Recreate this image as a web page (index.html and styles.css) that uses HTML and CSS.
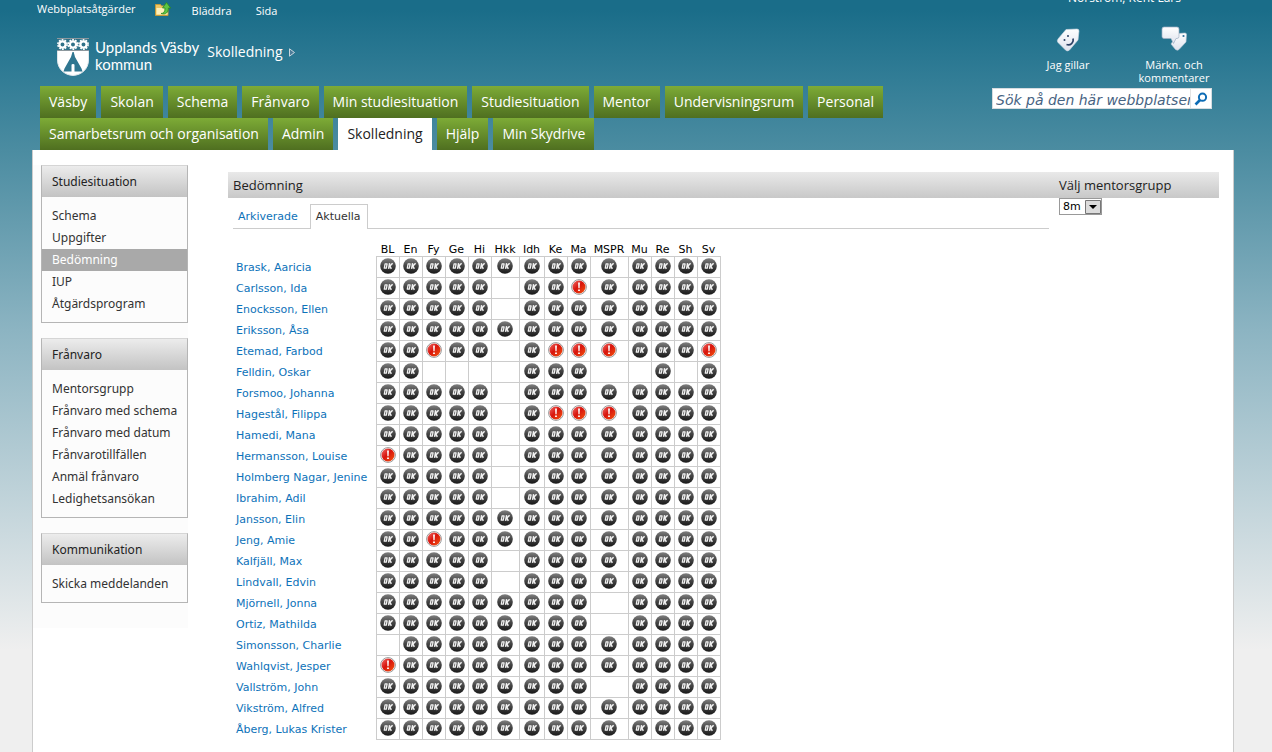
FILE: index.html
```html
<!DOCTYPE html>
<html lang="sv">
<head>
<meta charset="utf-8">
<title>Bedömning – Skolledning</title>
<link rel="stylesheet" href="styles.css">
</head>
<body>
<svg class="defs" aria-hidden="true">
  <defs>
    <linearGradient id="dark" x1="0" y1="0" x2="0" y2="1"><stop offset="0" stop-color="#808080"/><stop offset=".45" stop-color="#484848"/><stop offset="1" stop-color="#181818"/></linearGradient>
    <linearGradient id="red" x1="0" y1="0" x2="1" y2="1"><stop offset="0" stop-color="#f0706c"/><stop offset=".45" stop-color="#d8140c"/><stop offset="1" stop-color="#f4560f"/></linearGradient>
    <linearGradient id="pale" x1="0" y1="0" x2="0" y2="1"><stop offset="0" stop-color="#fff"/><stop offset="1" stop-color="#dfe3ee"/></linearGradient>
  </defs>
  <symbol id="ok" viewBox="0 0 16 16">
    <circle cx="8" cy="8" r="7.8" fill="url(#dark)"/>
    <path d="M5.100 5.900h2L6.300 10.200h-2z" fill="none" stroke="#f2f2f2" stroke-width="1.300" stroke-linejoin="round"/>
    <path d="M9.600 5.200 8.600 10.900M12.600 5.200 9.900 8l1.400 2.900" fill="none" stroke="#f2f2f2" stroke-width="1.500"/>
  </symbol>
  <symbol id="warn" viewBox="0 0 16 16">
    <circle cx="8" cy="8" r="7.400" fill="#fff" stroke="#8c8c8c" stroke-width=".9"/>
    <circle cx="8" cy="8" r="6.500" fill="url(#red)"/>
    <path d="M7.100 3.400h1.800l-.3 5.800H7.400zM7.100 10.400h1.800v1.700H7.100z" fill="#fff"/>
  </symbol>
  <symbol id="gear" viewBox="0 0 10 10">
    <circle cx="5" cy="5" r="4.200" fill="none" stroke="#fff" stroke-width="1.400" stroke-dasharray="1.700 .94"/>
    <circle cx="5" cy="5" r="2.800" fill="none" stroke="#fff" stroke-width="2"/>
  </symbol>
</svg>

<div class="ribbon">
  <div class="ribbon-left">
    <a class="site-actions" href="#">Webbplatsåtgärder</a>
    <button class="folder" type="button" aria-label="Navigera uppåt">
      <svg viewBox="0 0 16 16" width="16" height="16"><path d="M.5 3.500h5l1 1.500h6.500v9.500H.5z" fill="#efc765" stroke="#c39a3a"/><path d="M1.500 7h11v6.500h-11z" fill="#fdf0bb"/><path d="M6 12.500c3 0 4-2 4-5.500H7.500L11.500 1.500 15.700 7h-2.300c0 4.500-2.500 7-7.400 5.500z" fill="#5cc544" stroke="#2a8a1e" stroke-width=".8"/></svg>
    </button>
    <a class="ribbon-tab" href="#">Bläddra</a>
    <a class="ribbon-tab" href="#">Sida</a>
  </div>
  <a class="user" href="#">Norström, Kent Lars</a>
</div>

<header class="header">
  <div class="brand">
    <svg class="shield" viewBox="0 0 32 38" width="32" height="38">
      <path d="M.5.5h31v21.500c0 9-7 15-15.500 15.500C7.500 37 .5 31 .5 22z" fill="#fff" stroke="#dfe6ea"/>
      <path d="M0 0h32v12.500H0z" fill="#2f7188"/>
      <path d="M0 .5h32M0 12.500h32" stroke="#8d989e"/>
      <use href="#gear" x="0" y="1" width="11" height="11"/><use href="#gear" x="10.500" y="1" width="11" height="11"/><use href="#gear" x="21" y="1" width="11" height="11"/>
      <path d="M15.500 14h1.200l1.300 5 6.500 11.500 1 3h-8v-7h-3v7h-8l1-3L14 19z" fill="#2f7690"/>
      <path d="M15.200 26h1.600v7h-1.600z" fill="#fff"/>
    </svg>
    <div class="brand-name">Upplands Väsby<br>kommun</div>
    <a class="site-title" href="#">Skolledning
      <svg viewBox="0 0 6 9" width="6" height="9"><path d="M.5.8v7.400l5-3.700z" fill="#4b7c98" stroke="#c9d6de"/></svg>
    </a>
  </div>
  <div class="social">
    <a href="#">
      <svg viewBox="0 0 26 26" width="26" height="26"><path d="M11 3.500 22 3q2 0 2 2l-1 9-8.500 10q-1.500 1.500-3.500.5l-8-8q-1.500-1.500 0-3.500z" fill="url(#pale)" stroke="#cfd8e4" stroke-width=".6"/><circle cx="9.500" cy="14" r="1" fill="#2b3f63"/><circle cx="13" cy="10" r="1" fill="#2b3f63"/><path d="M11.500 18.500c4 1.500 7.500-2 6.500-6" fill="none" stroke="#2b3f63" stroke-width="1.600"/></svg>
      Jag gillar</a>
    <a href="#">
      <svg viewBox="0 0 28 26" width="28" height="26"><path d="M18 7.500 25 7q1.500 0 1.500 1.500L26 16l-7 7.500q-1.500 1.500-3.500 0L11 18z" fill="url(#pale)" stroke="#b9c7d6" stroke-width=".6"/><circle cx="23.500" cy="10" r="1.100" fill="#2f6f98"/><path d="M4 1h13q2 0 2 2v7.500q0 2-2 2h-1L13.500 17.500 11 12.500H4q-2 0-2-2V3q0-2 2-2z" fill="url(#pale)" stroke="#9fb0c4" stroke-width=".7"/></svg>
      Märkn. och kommentarer</a>
  </div>
</header>

<div class="nav-row">
  <nav class="tabs">
    <a href="#">Väsby</a><a href="#">Skolan</a><a href="#">Schema</a><a href="#">Frånvaro</a><a href="#">Min studiesituation</a><a href="#">Studiesituation</a><a href="#">Mentor</a><a href="#">Undervisningsrum</a><a href="#">Personal</a><a href="#">Samarbetsrum och organisation</a><a href="#">Admin</a><a class="current" href="#">Skolledning</a><a href="#">Hjälp</a><a href="#">Min Skydrive</a>
  </nav>
  <form class="search">
    <input type="text" aria-label="Sök" placeholder="Sök på den här webbplatsen...">
    <button type="button" aria-label="Sök"><svg viewBox="0 0 14 14" width="14" height="14"><circle cx="8.500" cy="5.200" r="3.600" fill="none" stroke="#0d6cb5" stroke-width="2"/><path d="M6 8 1.500 12.500" stroke="#0d6cb5" stroke-width="2.600"/></svg></button>
  </form>
</div>

<main class="page">
  <aside class="side">
    <section class="box">
      <h2>Studiesituation</h2>
      <ul><li><a href="#">Schema</a></li><li><a href="#">Uppgifter</a></li><li><a class="current" href="#">Bedömning</a></li><li><a href="#">IUP</a></li><li><a href="#">Åtgärdsprogram</a></li></ul>
    </section>
    <section class="box">
      <h2>Frånvaro</h2>
      <ul><li><a href="#">Mentorsgrupp</a></li><li><a href="#">Frånvaro med schema</a></li><li><a href="#">Frånvaro med datum</a></li><li><a href="#">Frånvarotillfällen</a></li><li><a href="#">Anmäl frånvaro</a></li><li><a href="#">Ledighetsansökan</a></li></ul>
    </section>
    <section class="box">
      <h2>Kommunikation</h2>
      <ul><li><a href="#">Skicka meddelanden</a></li></ul>
    </section>
  </aside>
  <div class="content">
    <section class="grades">
      <h2 class="bar">Bedömning</h2>
      <div class="subtabs"><a href="#">Arkiverade</a><a class="current" href="#">Aktuella</a></div>
      <table>
        <colgroup><col class="name"><col span="5"><col class="hkk"><col class="idh"><col span="2"><col class="mspr"><col span="4"></colgroup>
        <thead><tr id="subjects"><td></td></tr></thead>
        <tbody id="pupils"></tbody>
      </table>
    </section>
    <section class="group">
      <h2 class="bar"><label for="group">Välj mentorsgrupp</label></h2>
      <div class="picker">
        <select id="group"><option>8m</option></select>
        <svg viewBox="0 0 16 14" width="16" height="14" aria-hidden="true"><path d="M.5.5h15v13H.5z" fill="#dcdcdc" stroke="#777"/><path d="M4 5h8l-4 4z" fill="#000"/></svg>
      </div>
    </section>
  </div>
</main>
<script src="table.js"></script>
</body>
</html>
```

FILE: styles.css
```css
* { box-sizing: border-box; }
body {
  margin: 0;
  min-height: 100vh;
  display: flex;
  flex-direction: column;
  overflow: hidden;
  font: 13px/20px "Open Sans", "Noto Sans", sans-serif;
  color: #222;
  background: linear-gradient(#1a6d89 0, #1a6d89 10px, #327d96 80px, #4b8ca1 150px, #8cb4c2 330px, #efefef 650px) #efefef;
}
a { color: inherit; text-decoration: none; }
h2 { margin: 0; font-weight: 400; font-size: 13px; }
button { padding: 0; border: 0; background: none; }
.defs { position: absolute; width: 0; height: 0; }

.ribbon { display: flex; justify-content: space-between; height: 22px; padding: 0 91px 0 37px; color: #fff; font-size: 11px; }
.ribbon-left { display: flex; align-items: flex-start; }
.ribbon-left .folder { margin: 1px 21px 0 19px; height: 16px; }
.site-actions { line-height: 18px; }
.folder svg { display: block; }
.ribbon-tab { margin-right: 24px; padding-top: 1px; }
.user { margin-top: -12px; font-size: 12px; }

.header { display: flex; justify-content: space-between; height: 64px; padding: 0 58px 0 57px; color: #fff; }
.brand { display: flex; align-items: flex-start; padding-top: 16px; }
.brand-name { margin: 1px 8px 0 6px; font: 15px/17px Lato, sans-serif; }
.site-title { font-size: 14px; line-height: 28px; }
.site-title svg { margin-left: 3px; }
.social { display: flex; gap: 26px; padding-top: 4px; font-size: 11px; line-height: 13px; text-align: center; }
.social a { width: 80px; }
.social svg { display: block; margin: 0 auto 6px; }

.nav-row { display: flex; justify-content: space-between; align-items: flex-start; padding: 0 60px 0 40px; }
.tabs { display: flex; flex-wrap: wrap; column-gap: 5px; width: 860px; }
.tabs a { padding: 0 9px; font-size: 14px; line-height: 32px; color: #fff; background: linear-gradient(#7dab36, #4f6f20); }
.tabs .current { color: #222; background: #fff; }
.search { display: flex; width: 220px; height: 21px; margin-top: 2px; background: #fff; border: 1px solid #d6dce0; }
.search input { flex: 1; min-width: 0; border: 0; padding: 3px 0 0 3px; font: italic 14px "DejaVu Sans", sans-serif; color: #476382; background: none; }
.search input::placeholder { color: #476382; opacity: 1; }
.search button { width: 21px; border-left: 1px solid #e3e3e3; }
.search svg { display: block; margin: auto; }

.page { flex: 1; display: flex; margin: 0 38px 0 32px; padding-right: 14px; background: #fff; border: solid #ccc; border-width: 0 1px; }
.side { flex: none; align-self: flex-start; width: 155px; margin-top: 15px; padding: 0 0 25px 8px; background: #fcfcfc; font: 12px "Noto Sans", sans-serif; }
.box { border: 1px solid #b5b5b5; border-top-color: #d5d5d5; margin-bottom: 15px; }
.box:last-child { margin-bottom: 0; }
.box h2 { padding: 0 10px; font-size: 12px; line-height: 32px; height: 31px; background: linear-gradient(#ececec, #c3c3c3); }
.box ul { list-style: none; margin: 0; padding: 8px 0 7px; }
.box a { display: block; padding: 0 10px; line-height: 22px; color: #333; white-space: nowrap; }
.box .current { color: #fff; background: #a9a9a9; }

.content { flex: 1; display: flex; margin: 22px 0 0 40px; font: 11px/14px "DejaVu Sans", sans-serif; }
.bar { height: 26px; padding: 0 5px; font: 13px/26px "Open Sans", sans-serif; background: linear-gradient(#e9e9e9, #c8c8c8); }
.grades { flex: 1; }
.group { flex: none; width: 165px; }
.subtabs { display: flex; margin: 6px 5px 0; border-bottom: 1px solid #ccc; }
.subtabs a { padding: 6px 6px 4px 5px; color: #0d72b9; }
.subtabs a:first-child { padding: 6px 12px 4px 5px; }
.subtabs .current { padding: 5px 6px 5px 5px; color: #333; background: #fff; border: 1px solid #ccc; border-bottom: 0; margin-bottom: -1px; }
table { table-layout: fixed; width: 486px; border-collapse: collapse; margin: 12px 0 0 6px; }
col { width: 23px; }
.name { width: 142px; }
.hkk { width: 28px; }
.idh { width: 25px; }
.mspr { width: 38px; }
thead td, thead th { padding: 2px 0 0; font-weight: 400; line-height: 13px; color: #000; white-space: nowrap; }
tbody th { padding: 2px 0 0 2px; text-align: left; font-weight: 400; color: #0d72b9; white-space: nowrap; }
tbody td { height: 21px; padding: 0 0 2px; border: 1px solid #ccc; text-align: center; }
td svg { display: block; width: 16px; height: 16px; margin: 0 auto; }
.picker { position: relative; width: 43px; }
.picker select { width: 43px; height: 17px; padding: 0 3px; border: 1px solid #999; background: #fff; appearance: none; font: 11px "DejaVu Sans", sans-serif; }
.picker svg { position: absolute; right: 1px; top: 2px; pointer-events: none; }
.group .bar { padding-left: 5px; }
.group .picker { margin-left: 5px; }
```

FILE: table.js
```js
// Assessment status per pupil and subject: o = OK, x = warning, - = none.
const subjects = ["BL", "En", "Fy", "Ge", "Hi", "Hkk", "Idh", "Ke", "Ma", "MSPR", "Mu", "Re", "Sh", "Sv"];
const pupils = [
  ["Brask, Aaricia", "oooooooooooooo"],
  ["Carlsson, Ida", "ooooo-ooxooooo"],
  ["Enocksson, Ellen", "ooooo-oooooooo"],
  ["Eriksson, Åsa", "oooooooooooooo"],
  ["Etemad, Farbod", "ooxoo-oxxxooox"],
  ["Felldin, Oskar", "oo----ooo--o-o"],
  ["Forsmoo, Johanna", "ooooo-oooooooo"],
  ["Hagestål, Filippa", "ooooo-oxxxoooo"],
  ["Hamedi, Mana", "ooooo-oooooooo"],
  ["Hermansson, Louise", "xoooo-oooooooo"],
  ["Holmberg Nagar, Jenine", "ooooo-oooooooo"],
  ["Ibrahim, Adil", "ooooo-oooooooo"],
  ["Jansson, Elin", "oooooooooooooo"],
  ["Jeng, Amie", "ooxooooooooooo"],
  ["Kalfjäll, Max", "ooooo-oooooooo"],
  ["Lindvall, Edvin", "ooooo-oooooooo"],
  ["Mjörnell, Jonna", "ooooooooo-oooo"],
  ["Ortiz, Mathilda", "ooooooooo-oooo"],
  ["Simonsson, Charlie", "-ooooooooooooo"],
  ["Wahlqvist, Jesper", "xooooooooooooo"],
  ["Vallström, John", "ooooooooo-oooo"],
  ["Vikström, Alfred", "oooooooooooooo"],
  ["Åberg, Lukas Krister", "oooooooooooooo"]
];
const icons = {
  o: '<svg role="img" aria-label="OK"><use href="#ok"/></svg>',
  x: '<svg role="img" aria-label="Varning"><use href="#warn"/></svg>',
  "-": ""
};
document.getElementById("subjects").insertAdjacentHTML("beforeend",
  subjects.map(s => `<th scope="col">${s}</th>`).join(""));
document.getElementById("pupils").innerHTML = pupils.map(([name, marks]) =>
  `<tr><th scope="row"><a href="#">${name}</a></th>${[...marks].map(m => `<td>${icons[m]}</td>`).join("")}</tr>`).join("");
```
